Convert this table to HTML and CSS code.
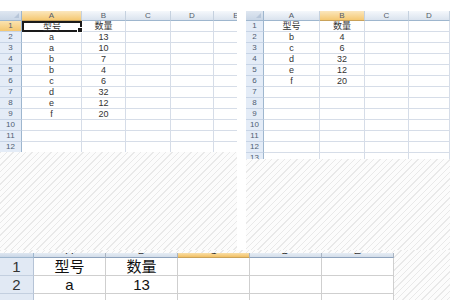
FILE: index.html
```html
<!DOCTYPE html>
<html>
<head>
<meta charset="utf-8">
<link rel="stylesheet" href="styles.css">
</head>
<body>
<div class="page">
  <div class="top">
    <div class="panel panel-left">
      <div class="sheet sheet-left">
        <div class="corner"></div><div class="ch sel">A</div><div class="ch">B</div><div class="ch">C</div><div class="ch">D</div><div class="ch">E</div>
        <div class="rh sel">1</div><div class="c active">型号</div><div class="c">数量</div><div class="c"></div><div class="c"></div><div class="c"></div>
        <div class="rh">2</div><div class="c">a</div><div class="c">13</div><div class="c"></div><div class="c"></div><div class="c"></div>
        <div class="rh">3</div><div class="c">a</div><div class="c">10</div><div class="c"></div><div class="c"></div><div class="c"></div>
        <div class="rh">4</div><div class="c">b</div><div class="c">7</div><div class="c"></div><div class="c"></div><div class="c"></div>
        <div class="rh">5</div><div class="c">b</div><div class="c">4</div><div class="c"></div><div class="c"></div><div class="c"></div>
        <div class="rh">6</div><div class="c">c</div><div class="c">6</div><div class="c"></div><div class="c"></div><div class="c"></div>
        <div class="rh">7</div><div class="c">d</div><div class="c">32</div><div class="c"></div><div class="c"></div><div class="c"></div>
        <div class="rh">8</div><div class="c">e</div><div class="c">12</div><div class="c"></div><div class="c"></div><div class="c"></div>
        <div class="rh">9</div><div class="c">f</div><div class="c">20</div><div class="c"></div><div class="c"></div><div class="c"></div>
        <div class="rh">10</div><div class="c"></div><div class="c"></div><div class="c"></div><div class="c"></div><div class="c"></div>
        <div class="rh">11</div><div class="c"></div><div class="c"></div><div class="c"></div><div class="c"></div><div class="c"></div>
        <div class="rh">12</div><div class="c"></div><div class="c"></div><div class="c"></div><div class="c"></div><div class="c"></div>
      </div>
      <div class="hatch hatch-left"></div>
    </div>
    <div class="panel panel-right">
      <div class="sheet sheet-right">
        <div class="corner"></div><div class="ch">A</div><div class="ch sel">B</div><div class="ch">C</div><div class="ch">D</div><div class="ch">E</div>
        <div class="rh">1</div><div class="c">型号</div><div class="c">数量</div><div class="c"></div><div class="c"></div><div class="c"></div>
        <div class="rh">2</div><div class="c">b</div><div class="c">4</div><div class="c"></div><div class="c"></div><div class="c"></div>
        <div class="rh">3</div><div class="c">c</div><div class="c">6</div><div class="c"></div><div class="c"></div><div class="c"></div>
        <div class="rh">4</div><div class="c">d</div><div class="c">32</div><div class="c"></div><div class="c"></div><div class="c"></div>
        <div class="rh">5</div><div class="c">e</div><div class="c">12</div><div class="c"></div><div class="c"></div><div class="c"></div>
        <div class="rh">6</div><div class="c">f</div><div class="c">20</div><div class="c"></div><div class="c"></div><div class="c"></div>
        <div class="rh">7</div><div class="c"></div><div class="c"></div><div class="c"></div><div class="c"></div><div class="c"></div>
        <div class="rh">8</div><div class="c"></div><div class="c"></div><div class="c"></div><div class="c"></div><div class="c"></div>
        <div class="rh">9</div><div class="c"></div><div class="c"></div><div class="c"></div><div class="c"></div><div class="c"></div>
        <div class="rh">10</div><div class="c"></div><div class="c"></div><div class="c"></div><div class="c"></div><div class="c"></div>
        <div class="rh">11</div><div class="c"></div><div class="c"></div><div class="c"></div><div class="c"></div><div class="c"></div>
        <div class="rh">12</div><div class="c"></div><div class="c"></div><div class="c"></div><div class="c"></div><div class="c"></div>
        <div class="rh">13</div><div class="c"></div><div class="c"></div><div class="c"></div><div class="c"></div><div class="c"></div>
      </div>
      <div class="hatch hatch-right"></div>
    </div>
  </div>
  <div class="hatch bottom">
    <div class="sheet sheet-big">
      <div class="corner"></div><div class="ch"><span class="cut">A</span></div><div class="ch"><span class="cut">B</span></div><div class="ch sel"><span class="cut">C</span></div><div class="ch"><span class="cut">D</span></div><div class="ch"><span class="cut">E</span></div>
      <div class="rh">1</div><div class="c">型号</div><div class="c">数量</div><div class="c"></div><div class="c"></div><div class="c"></div>
      <div class="rh">2</div><div class="c">a</div><div class="c">13</div><div class="c"></div><div class="c"></div><div class="c"></div>
      <div class="rh"></div><div class="c"></div><div class="c"></div><div class="c"></div><div class="c"></div><div class="c"></div>
    </div>
  </div>
</div>
</body>
</html>
```

FILE: styles.css
```css
* { box-sizing: border-box; }
html, body { margin: 0; padding: 0; background: #fff; }
.page {
  width: 450px;
  height: 300px;
  overflow: hidden;
  background: #fff;
  font-family: "Liberation Sans", "Noto Sans CJK SC", sans-serif;
  color: #333;
}
.top {
  display: flex;
  gap: 9px;
  padding-top: 11px;
}
.panel { display: flex; flex-direction: column; }
.panel-left { width: 237px; }
.panel-right { flex: 1; min-width: 0; }

.hatch {
  background: repeating-linear-gradient(135deg, #e9e9e9 0 1px, #fcfcfc 1px 4.5px);
}
.hatch-left { height: 98px; }
.hatch-right { height: 91px; }

.sheet {
  display: grid;
  overflow: hidden;
  background: #fff;
  font-size: 9px;
}
.sheet-left {
  height: 141px;
  grid-template-columns: 22px 60px 44px 45px 43px 45px;
  grid-template-rows: 10px;
  grid-auto-rows: 11px;
}
.sheet-right {
  height: 148px;
  grid-template-columns: 18px 56px 45px 44px 41px 40px;
  grid-template-rows: 10px;
  grid-auto-rows: 11px;
}

.corner {
  position: relative;
  background: linear-gradient(#dfe7f1, #c9d6e6);
  border-right: 1px solid #9eb6ce;
  border-bottom: 1px solid #9eb6ce;
}
.corner::after {
  content: "";
  position: absolute;
  right: 2px;
  bottom: 2px;
  border-left: 5px solid transparent;
  border-bottom: 5px solid #b7c6d9;
}
.ch {
  background: linear-gradient(#f5f8fc, #dae3ee);
  border-right: 1px solid #c5d1df;
  border-bottom: 1px solid #9eb6ce;
  color: #555d68;
  font-size: 8px;
  line-height: 10px;
  text-align: center;
}
.ch.sel {
  background: linear-gradient(#fbe7bd, #f5c872);
  border-bottom-color: #c9a25a;
}
.rh {
  background: #e4ecf7;
  border-right: 1px solid #9eb6ce;
  border-bottom: 1px solid #c7d4e6;
  color: #4f5d72;
  font-size: 8px;
  line-height: 10px;
  text-align: center;
}
.rh.sel { background: linear-gradient(#fbe3b0, #f4c76f); }
.c {
  border-right: 1px solid #d6dde8;
  border-bottom: 1px solid #d6dde8;
  line-height: 10px;
  text-align: center;
  white-space: nowrap;
  color: #333;
}
.c.active {
  position: relative;
  border: 2px solid #1a1a1a;
  line-height: 8px;
}
.c.active::after {
  content: "";
  position: absolute;
  right: -3px;
  bottom: -3px;
  width: 4px;
  height: 4px;
  background: #1a1a1a;
  border: 1px solid #fff;
}

.bottom {
  height: 50px;
  padding-top: 3px;
}
.sheet-big {
  width: 394px;
  height: 47px;
  font-size: 15px;
  grid-template-columns: 34px 72px 72px 72px 72px 72px;
  grid-template-rows: 5px 18px 18px 18px;
}
.sheet-big .ch {
  font-size: 11px;
  line-height: 11px;
  color: #333;
  background: linear-gradient(#e6edf5, #d3dde9);
  border-right-color: #a9b4c2;
  border-bottom: 1px solid #8ea3bd;
  overflow: hidden;
}
.sheet-big .ch.sel {
  background: linear-gradient(#f9dfa8, #f2c064);
  border-bottom-color: #c9a25a;
}
.sheet-big .cut {
  display: block;
  margin-top: -8px;
}
.sheet-big .rh {
  font-size: 15px;
  line-height: 17px;
  color: #333;
  background: #e1e9f4;
  border-right: 1px solid #b5c3d6;
  border-bottom: 1px solid #c3cfdf;
}
.sheet-big .c {
  line-height: 17px;
  color: #111;
  border-right-color: #cfcfcf;
  border-bottom-color: #cfcfcf;
}
.sheet-big .corner::after { display: none; }
```
